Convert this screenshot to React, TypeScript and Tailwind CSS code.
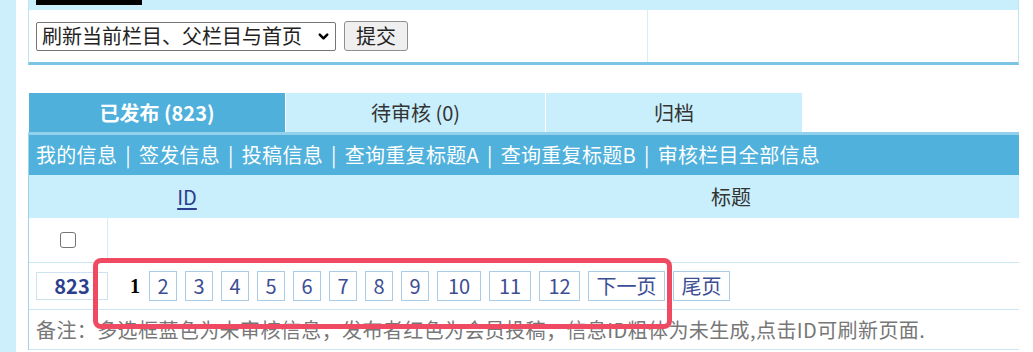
import React from 'react';
import { ChevronDown } from 'lucide-react';

const pages: { label: string; w: string }[] = [
  { label: '2', w: 'w-[28px]' },
  { label: '3', w: 'w-[28px]' },
  { label: '4', w: 'w-[28px]' },
  { label: '5', w: 'w-[28px]' },
  { label: '6', w: 'w-[28px]' },
  { label: '7', w: 'w-[28px]' },
  { label: '8', w: 'w-[28px]' },
  { label: '9', w: 'w-[28px]' },
  { label: '10', w: 'w-[44px]' },
  { label: '11', w: 'w-[42px]' },
  { label: '12', w: 'w-[41px]' },
  { label: '下一页', w: 'w-[77px]' },
  { label: '尾页', w: 'w-[57px]' },
];

const links = ['我的信息', '签发信息', '投稿信息', '查询重复标题A', '查询重复标题B', '审核栏目全部信息'];

const App: React.FC = () => {
  return (
    <div className="flex h-[352px] w-[1033px] overflow-hidden bg-white font-['Noto_Sans_CJK_SC',sans-serif] text-[20px] leading-none text-[#333]">
      <div className="w-[16px] shrink-0 bg-[#cdeefb]" />
      <div className="relative ml-[12px] w-[991px] shrink-0">
        {/* top panel */}
        <div className="border-x border-b-[3px] border-x-[#bfe4f4] border-b-[#7cc4e4]">
          <div className="h-[10px] bg-[#c9eefc]">
            <div className="ml-[7px] h-[5px] w-[106px] bg-black" />
          </div>
          <div className="flex h-[52px]">
            <div className="flex w-[619px] items-center gap-[8px] border-r border-[#d6eef9] pl-[7px]">
              <div className="flex h-[29px] w-[300px] items-center justify-between rounded-[2px] border border-[#767676] pl-[5px] pr-[4px]">
                <span className="text-[#222]">刷新当前栏目、父栏目与首页</span>
                <ChevronDown size={15} strokeWidth={4} className="text-black" />
              </div>
              <div className="flex h-[30px] w-[64px] items-center justify-center rounded-[3px] border border-[#8f8f8f] bg-[#efefef] text-[#222]">
                提交
              </div>
            </div>
            <div className="flex-1" />
          </div>
        </div>

        {/* tabs */}
        <div className="mt-[28px] flex h-[39px] gap-[1px] pl-[1px]">
          <div className="flex w-[256px] items-center justify-center bg-[#4fb0dc] font-bold text-white">已发布 (823)</div>
          <div className="flex w-[259px] items-center justify-center bg-[#c9eefc]">待审核 (0)</div>
          <div className="flex w-[256px] items-center justify-center bg-[#c9eefc]">归档</div>
        </div>

        {/* table */}
        <div className="border-l border-[#9fd3ea]">
          <div className="flex h-[43px] items-center border-t-[3px] border-[#93d0ec] bg-[#4fb1dc] pl-[7px] tracking-[0.3px] text-white">
            {links.map((l, i) => (
              <React.Fragment key={l}>
                {i > 0 && <span className="px-[8px]">|</span>}
                <span>{l}</span>
              </React.Fragment>
            ))}
          </div>
          <div className="grid h-[43px] grid-cols-[316px_1fr] bg-[#c9eefc]">
            <div className="flex items-center justify-center">
              <span className="text-[#2d3e8c] underline underline-offset-[3px]">ID</span>
            </div>
            <div className="flex items-center justify-center pl-[98px]">标题</div>
          </div>
          <div className="flex h-[45px] border-b border-[#cbe7f5]">
            <div className="flex w-[79px] items-center justify-center border-r border-[#d4ecf8]">
              <div className="h-[16px] w-[16px] rounded-[3px] border border-[#767676] bg-white" />
            </div>
          </div>
          <div className="flex h-[47px] items-center border-b border-[#cbe7f5] pl-[7px]">
            <div className="flex h-[28px] w-[72px] items-center justify-center border border-[#cde3f0] font-bold text-[#2b3f8f]">
              823
            </div>
            <span className="ml-[22px] mr-[9px] font-['Liberation_Serif',serif] font-bold text-black">1</span>
            <div className="flex gap-[8px]">
              {pages.map((p) => (
                <div
                  key={p.label}
                  className={`flex h-[30px] ${p.w} items-center justify-center border border-[#a9cde8] text-[#3c4e94]`}
                >
                  {p.label}
                </div>
              ))}
            </div>
          </div>
          <div className="flex h-[40px] items-center border-b border-[#cbe7f5] pl-[7px] tracking-[0.4px] text-[#777]">
            备注：多选框蓝色为未审核信息；发布者红色为会员投稿；信息ID粗体为未生成,点击ID可刷新页面.
          </div>
        </div>

        {/* highlight annotation */}
        <div className="absolute left-[65px] top-[258px] h-[71px] w-[579px] rounded-[8px] border-[5px] border-[#ef4a62]" />
      </div>
    </div>
  );
};

export default App;
